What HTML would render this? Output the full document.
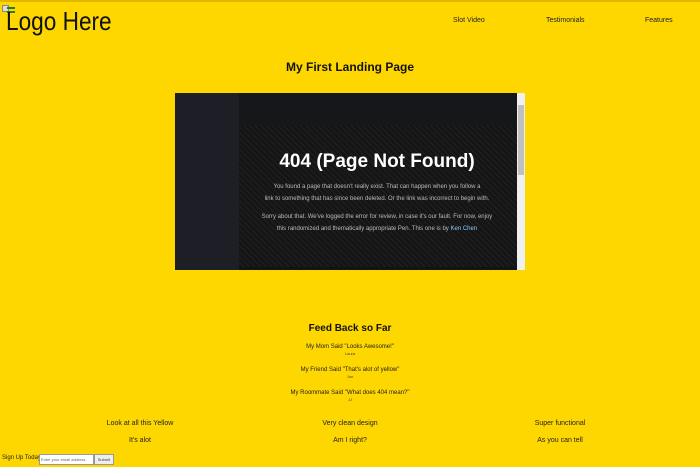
<!DOCTYPE html>
<html><head><meta charset="utf-8"><style>
body{margin:0;width:700px;height:467px;background:#ffd700;font-family:"Liberation Sans",sans-serif;position:relative;overflow:hidden;border-top:2px solid #e0b800;box-sizing:border-box}
.a{position:absolute;white-space:nowrap}
.c{transform:translateX(-50%)}
</style></head><body>
<div class="a" style="left:2px;top:3px;width:10px;height:10px">
<div style="position:absolute;left:0;top:0;width:5px;height:5px;background:#ddd;border:1px solid #888"></div>
<div style="position:absolute;left:5px;top:2px;width:8px;height:2px;background:#2a7a20"></div>
<div style="position:absolute;left:5px;top:6px;width:8px;height:2px;background:#2a7a20"></div></div>
<div class="a" style="left:6px;top:4px;font-size:26px;color:#111;transform:scaleX(0.87);transform-origin:left">Logo Here</div>
<div class="a" style="left:453px;top:15px;font-size:7px;color:#222">Slot Video</div>
<div class="a" style="left:546px;top:15px;font-size:7px;color:#222">Testimonials</div>
<div class="a" style="left:645px;top:15px;font-size:7px;color:#222">Features</div>
<div class="a c" style="left:350px;top:58px;font-size:12px;font-weight:bold;color:#111">My First Landing Page</div>

<div class="a" style="left:175px;top:91px;width:350px;height:177px;background:#121316">
<div class="a" style="left:0;top:0;width:64px;height:177px;background:#1e1f26"></div>
<div class="a" style="left:64px;top:0;width:278px;height:32px;background:#16171b"></div>
<div class="a" style="left:64px;top:32px;width:278px;height:142px;background:repeating-linear-gradient(45deg,#151515 0 3px,#202020 3px 4px)"></div>
<div class="a c" style="left:202px;top:58px;font-size:19px;font-weight:bold;color:#fff">404 (Page Not Found)</div>
<div class="a c" style="left:202px;top:88px;font-size:6px;color:#bbb;text-align:center;line-height:12px">You found a page that doesn't really exist. That can happen when you follow a<br>link to something that has since been deleted. Or the link was incorrect to begin with.</div>
<div class="a c" style="left:202px;top:118px;font-size:6px;color:#bbb;text-align:center;line-height:12px">Sorry about that. We've logged the error for review, in case it's our fault. For now, enjoy<br>this randomized and thematically appropriate Pen. This one is by <span style="color:#8cf">Ken Chen</span></div>
<div class="a" style="left:342px;top:0;width:8px;height:177px;background:#f0f0f0"></div>
<div class="a" style="left:343px;top:12px;width:6px;height:70px;background:#c0c0c0"></div>
</div>

<div class="a c" style="left:350px;top:321px;font-size:10px;font-weight:bold;color:#111">Feed Back so Far</div>
<div class="a c" style="left:350px;top:342px;font-size:6px;color:#222">My Mom Said "Looks Awesome!"</div>
<div class="a c" style="left:350px;top:349px;font-size:4px;color:#444">Laura</div>
<div class="a c" style="left:350px;top:365px;font-size:6px;color:#222">My Friend Said "That's alot of yellow"</div>
<div class="a c" style="left:350px;top:372px;font-size:4px;color:#444">Jon</div>
<div class="a c" style="left:350px;top:388px;font-size:6px;color:#222">My Roommate Said "What does 404 mean?"</div>
<div class="a c" style="left:350px;top:395px;font-size:4px;color:#444">JJ</div>
<div class="a c" style="left:140px;top:418px;font-size:7px;color:#222">Look at all this Yellow</div>
<div class="a c" style="left:350px;top:418px;font-size:7px;color:#222">Very clean design</div>
<div class="a c" style="left:560px;top:418px;font-size:7px;color:#222">Super functional</div>
<div class="a c" style="left:140px;top:435px;font-size:7px;color:#222">It's alot</div>
<div class="a c" style="left:350px;top:435px;font-size:7px;color:#222">Am I right?</div>
<div class="a c" style="left:560px;top:435px;font-size:7px;color:#222">As you can tell</div>
<div class="a" style="left:2px;top:453px;font-size:6px;color:#222">Sign Up Today!</div>
<div class="a" style="left:39px;top:452px;width:52px;height:9px;background:#fff;border:1px solid #999;font-size:4px;color:#666;line-height:9px;padding-left:1px">Enter your email address</div>
<div class="a" style="left:94px;top:452px;width:18px;height:9px;background:#eee;border:1px solid #999;font-size:4px;color:#333;line-height:9px;text-align:center">Submit</div>
</body></html>
